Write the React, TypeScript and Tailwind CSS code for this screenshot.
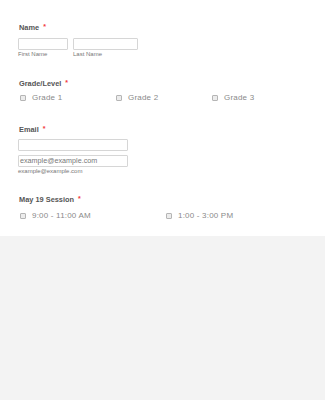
import React from "react";

const Req = () => <span className="text-[#f23a3c] text-[7px] ml-[4px] relative -top-[1px]">*</span>;

const Box = () => (
  <span className="inline-block w-[6px] h-[6px] border border-[#b5b5b5] bg-[#ececec] rounded-[1px] shrink-0" />
);

const Check = ({ label }: { label: string }) => (
  <div className="flex items-center h-[12px]">
    <span className="ml-[2px] mr-[6px] flex"><Box /></span>
    <span className="text-[8px] leading-[12px] text-[#8a8a8a] tracking-[0.2px]">{label}</span>
  </div>
);

export default function App() {
  return (
    <div className="w-[325px] h-[400px] bg-[#f3f3f3]" style={{ fontFamily: '"Liberation Sans", Arial, sans-serif' }}>
      <div className="bg-white h-[236px] px-[18px] pt-[23px]">
        {/* Name */}
        <div className="text-[7.4px] font-bold leading-[10px] text-[#555] pl-[1px]">Name<Req /></div>
        <div className="flex gap-[5px] mt-[5px]">
          <div className="flex flex-col">
            <div className="w-[50px] h-[12px] border border-[#d6d6d6] rounded-[1px]" />
            <div className="text-[6px] leading-[8px] text-[#777]">First Name</div>
          </div>
          <div className="flex flex-col">
            <div className="w-[65px] h-[12px] border border-[#d6d6d6] rounded-[1px]" />
            <div className="text-[6px] leading-[8px] text-[#777]">Last Name</div>
          </div>
        </div>

        {/* Grade */}
        <div className="mt-[21px] text-[7.4px] font-bold leading-[10px] text-[#555] pl-[1px]">Grade/Level<Req /></div>
        <div className="grid grid-cols-[96px_96px_96px] mt-[3px]">
          <Check label="Grade 1" />
          <Check label="Grade 2" />
          <Check label="Grade 3" />
        </div>

        {/* Email */}
        <div className="mt-[21px] text-[7.4px] font-bold leading-[10px] text-[#555] pl-[1px]">Email<Req /></div>
        <div className="w-[110px] h-[12px] border border-[#d6d6d6] rounded-[1px] mt-[4px]" />
        <div className="w-[110px] h-[12px] border border-[#d6d6d6] rounded-[1px] mt-[4px] text-[7.2px] leading-[10px] text-[#777] pl-[1px]">example@example.com</div>
        <div className="text-[6px] leading-[8px] text-[#777]">example@example.com</div>

        {/* Session */}
        <div className="mt-[20px] text-[7.4px] font-bold leading-[10px] text-[#555] pl-[1px]">May 19 Session<Req /></div>
        <div className="grid grid-cols-[146px_146px] mt-[5px]">
          <Check label="9:00 - 11:00 AM" />
          <Check label="1:00 - 3:00 PM" />
        </div>
      </div>
    </div>
  );
}
